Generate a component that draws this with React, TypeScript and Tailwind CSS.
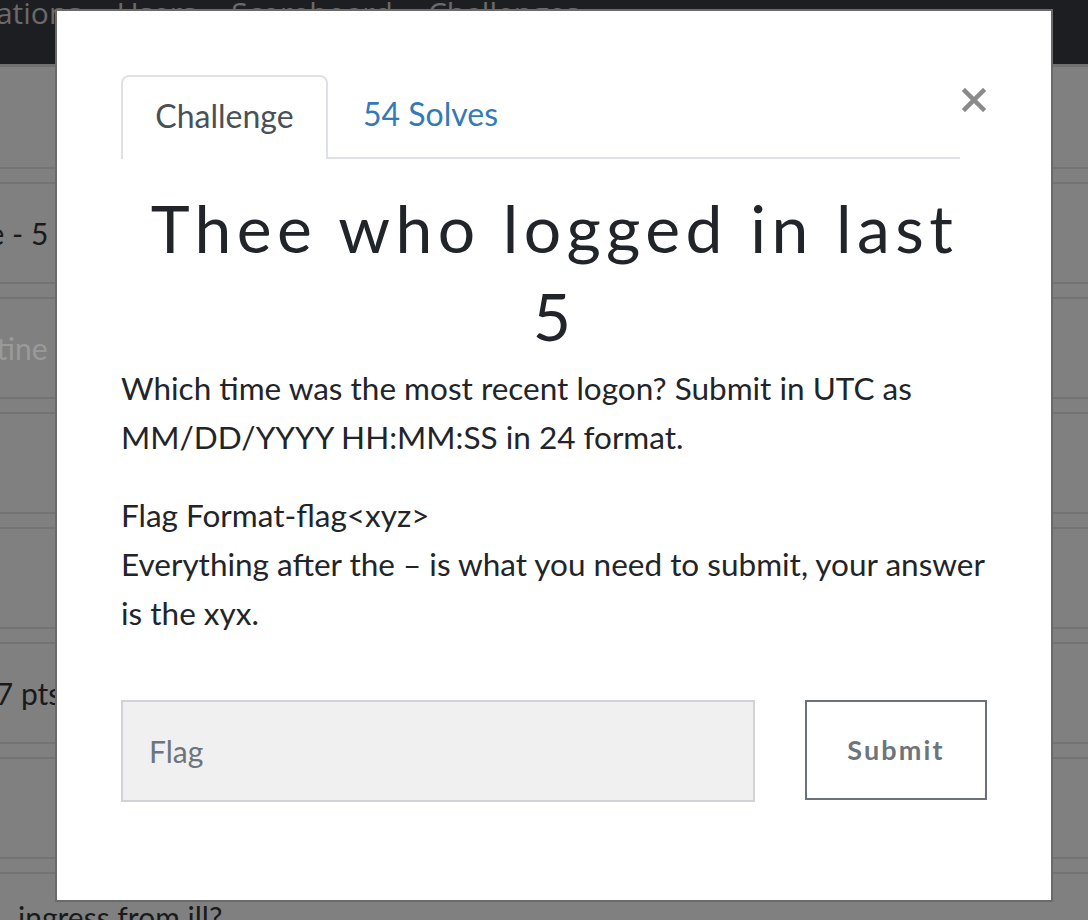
import React from "react";

export default function App() {
  const lato = { fontFamily: "Lato, 'Noto Sans', sans-serif" } as React.CSSProperties;
  return (
    <div className="relative w-[1088px] h-[920px] overflow-hidden bg-[#808080]" style={lato}>
      {/* navbar */}
      <div className="h-[64px] bg-[#1d1e22] flex items-start overflow-hidden">
        <div className="flex gap-[35px] -ml-[95px] -mt-[2px] text-[30px] leading-[30px] text-[#6a6a6a] whitespace-nowrap" style={{ fontFamily: "'Open Sans', sans-serif" }}>
          <span>Notifications</span>
          <span>Users</span>
          <span>Scoreboard</span>
          <span>Challenges</span>
        </div>
      </div>
      <div className="h-[3px] bg-[#707070]" />
      {/* background list */}
      <div className="flex flex-col">
        <div className="h-[100px]" />
        <div className="h-[17px] border-t-[2px] border-b-[2px] border-[#737373]" />
        <div className="h-[98px] flex items-center text-[30px] text-[#1a1a1a] whitespace-nowrap">
          <span className="-ml-[74px]">Phase - 5</span>
        </div>
        <div className="h-[17px] border-t-[2px] border-b-[2px] border-[#737373]" />
        <div className="h-[98px] flex items-center text-[30px] text-[#9a9a9a] whitespace-nowrap">
          <span className="-ml-[55px]">Routine</span>
        </div>
        <div className="h-[17px] border-t-[2px] border-b-[2px] border-[#737373]" />
        <div className="h-[98px]" />
        <div className="h-[17px] border-t-[2px] border-b-[2px] border-[#737373]" />
        <div className="h-[98px]" />
        <div className="h-[17px] border-t-[2px] border-b-[2px] border-[#737373]" />
        <div className="h-[98px] flex items-center text-[30px] text-[#1a1a1a] whitespace-nowrap">
          <span className="-ml-[39px]">117 pts</span>
        </div>
        <div className="h-[17px] border-t-[2px] border-b-[2px] border-[#737373]" />
        <div className="h-[98px]" />
        <div className="h-[17px] border-t-[2px] border-b-[2px] border-[#737373]" />
        <div className="h-[40px] pl-[18px] pt-[28px] text-[30px] leading-[30px] text-[#1a1a1a] whitespace-nowrap">
          ingress from ill? ...
        </div>
      </div>

      {/* modal */}
      <div className="absolute left-[55px] top-[9px] w-[998px] h-[893px] bg-white border-[2px] border-[#6a6a6a]">
        <div className="relative pl-[64px] pr-[63px] pt-[64px]">
          <button className="absolute right-[64px] top-[76px] w-[26px] h-[26px] flex items-center justify-center">
            <svg width="24" height="24" viewBox="0 0 24 24">
              <path d="M3 3 L21 21 M21 3 L3 21" stroke="#8a8a8a" strokeWidth="4.5" strokeLinecap="square" />
            </svg>
          </button>
          {/* tabs */}
          <div className="flex w-[839px] items-end">
            <div className="w-[207px] h-[84px] border-[2px] border-b-0 border-[#dee2e6] rounded-t-[8px] flex items-center justify-center text-[32px] text-[#495057] pb-[4px]">
              Challenge
            </div>
            <div className="flex-1 h-[84px] border-b-[2px] border-[#dee2e6] flex items-center pl-[35px] text-[32px] text-[#337ab7] pb-[4px]">
              54 Solves
            </div>
          </div>
          {/* title */}
          <h1 className="mt-[25px] text-center text-[66px] leading-[88px] tracking-[0.082em] text-[#212529]" style={{ fontFamily: "Lato, sans-serif", fontWeight: 400 }}>
            Thee who logged in last
            <br />5
          </h1>
          <div className="mt-[4px] text-[31.5px] leading-[49px] text-[#212529]">
            <p>Which time was the most recent logon? Submit in UTC as MM/DD/YYYY HH:MM:SS in 24 format.</p>
            <p className="mt-[29px]">
              Flag Format-flag&lt;xyz&gt;
              <br />
              Everything after the – is what you need to submit, your answer is the xyx.
            </p>
          </div>
          <div className="mt-[62px] flex gap-[50px]">
            <div className="w-[634px] h-[102px] bg-[#f0f0f0] border-[2px] border-[#cfd3d8] flex items-center pl-[26px] text-[30px] text-[#6c757d]">
              Flag
            </div>
            <button className="w-[182px] h-[100px] border-[2px] border-[#6c727a] bg-white text-[27px] font-bold tracking-[0.08em] text-[#6c757d]">
              Submit
            </button>
          </div>
        </div>
      </div>
    </div>
  );
}
